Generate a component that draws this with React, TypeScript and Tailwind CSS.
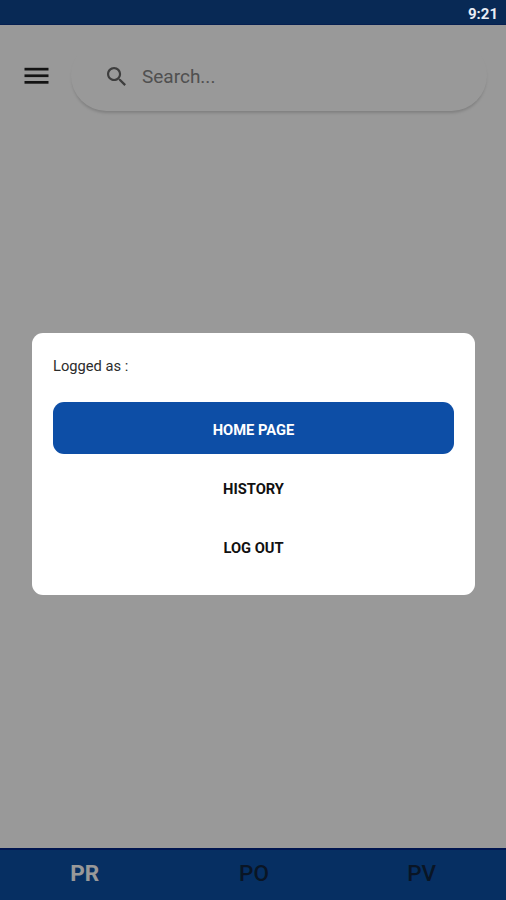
import { useState } from 'react';

type Tab = 'PR' | 'PO' | 'PV';

const TABS: { value: Tab; className: string }[] = [
  { value: 'PR', className: 'pl-px' },
  { value: 'PO', className: 'pl-0.5' },
  { value: 'PV', className: 'pl-0' },
];

const MENU_ITEMS = ['HOME PAGE', 'HISTORY', 'LOG OUT'];

function StatusBar() {
  return (
    <div className="flex h-[25px] shrink-0 items-center justify-end border-b border-[#061f50] bg-[#082955] pt-1 pr-2">
      <span className="text-[15px] leading-none font-bold text-[#e8edf5]">9:21</span>
    </div>
  );
}

function SearchHeader() {
  return (
    <header className="flex items-center pt-[15px] pr-[19px]">
      <button className="ml-6 shrink-0" aria-label="Menu">
        <svg width="25" height="18" viewBox="0 0 25 18" fill="#202020">
          <rect x="0.5" y="0.8" width="24" height="2.7" />
          <rect x="0.5" y="7.4" width="24" height="2.7" />
          <rect x="0.5" y="14" width="24" height="2.7" />
        </svg>
      </button>
      <div className="ml-[22px] flex h-[71px] flex-1 items-center rounded-full bg-white pl-9 shadow-[0_3px_3px_-1px_rgba(0,0,0,0.17)]">
        <svg width="19" height="19" viewBox="3 3 17.5 17.5" fill="#686868" className="mt-px">
          <path d="M15.5 14h-.79l-.28-.27C15.41 12.59 16 11.11 16 9.5 16 5.91 13.09 3 9.5 3S3 5.91 3 9.5 5.91 16 9.5 16c1.61 0 3.09-.59 4.23-1.57l.27.28v.79l5 4.99L20.49 19l-4.99-5zm-6 0C7.01 14 5 11.99 5 9.5S7.01 5 9.5 5 14 7.01 14 9.5 11.99 14 9.5 14z" />
        </svg>
        <input
          type="text"
          placeholder="Search..."
          className="mt-[3px] ml-4 min-w-0 flex-1 bg-transparent text-[19px] outline-none placeholder:text-[#858585]"
        />
      </div>
    </header>
  );
}

function AccountMenu() {
  const [selected, setSelected] = useState('HOME PAGE');

  return (
    <div className="mt-[3px] h-[262px] w-[443px] rounded-[11px] bg-white px-[21px] pt-[23px]">
      <p className="text-[14.7px] leading-5 text-[#2c2c2c]">Logged as :</p>
      <div className="mt-[26px] flex flex-col gap-[7px]">
        {MENU_ITEMS.map((item) => (
          <button
            key={item}
            onClick={() => setSelected(item)}
            className={`h-[52px] rounded-[11px] pt-1 text-[14.7px] font-bold ${
              selected === item ? 'bg-[#0d4ea6] text-white' : 'text-[#111]'
            }`}
          >
            {item}
          </button>
        ))}
      </div>
    </div>
  );
}

export default function App() {
  const [tab, setTab] = useState<Tab>('PR');

  return (
    <div className="flex h-[900px] w-[506px] flex-col overflow-hidden font-['Roboto',sans-serif]">
      <StatusBar />
      <div className="relative flex flex-1 flex-col bg-white">
        <SearchHeader />
        <main className="flex-1" />
        <nav className="grid h-[52px] grid-cols-3 border-t-2 border-[#002686] bg-[#0b4fa4]">
          {TABS.map(({ value, className }) => (
            <button
              key={value}
              onClick={() => setTab(value)}
              className={`pb-[3px] text-[22.5px] leading-none ${className} ${
                tab === value ? 'font-bold text-white' : 'font-medium text-[#10243e]'
              }`}
            >
              {value}
            </button>
          ))}
        </nav>

        <div className="absolute inset-0 flex items-center justify-center bg-black/40 pl-px">
          <AccountMenu />
        </div>
      </div>
    </div>
  );
}
